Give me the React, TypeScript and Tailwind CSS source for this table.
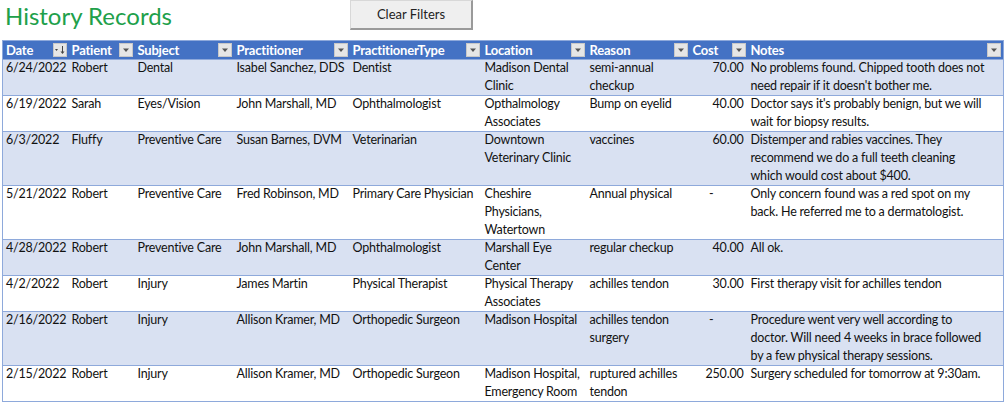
const cols = [
  { key: "date", label: "Date", w: 66 },
  { key: "patient", label: "Patient", w: 66 },
  { key: "subject", label: "Subject", w: 99 },
  { key: "practitioner", label: "Practitioner", w: 116 },
  { key: "ptype", label: "PractitionerType", w: 132 },
  { key: "location", label: "Location", w: 105 },
  { key: "reason", label: "Reason", w: 103 },
  { key: "cost", label: "Cost", w: 58 },
  { key: "notes", label: "Notes", w: 256 },
];

type Row = {
  date: string;
  patient: string;
  subject: string;
  practitioner: string;
  ptype: string;
  location: string;
  reason: string;
  cost: string;
  notes: string;
};

// line breaks follow the wrapping of the sheet
const rows: Row[] = [
  {
    date: "6/24/2022",
    patient: "Robert",
    subject: "Dental",
    practitioner: "Isabel Sanchez, DDS",
    ptype: "Dentist",
    location: "Madison Dental\nClinic",
    reason: "semi-annual\ncheckup",
    cost: "70.00",
    notes: "No problems found. Chipped tooth does not\nneed repair if it doesn't bother me.",
  },
  {
    date: "6/19/2022",
    patient: "Sarah",
    subject: "Eyes/Vision",
    practitioner: "John Marshall, MD",
    ptype: "Ophthalmologist",
    location: "Opthalmology\nAssociates",
    reason: "Bump on eyelid",
    cost: "40.00",
    notes: "Doctor says it's probably benign, but we will\nwait for biopsy results.",
  },
  {
    date: "6/3/2022",
    patient: "Fluffy",
    subject: "Preventive Care",
    practitioner: "Susan Barnes, DVM",
    ptype: "Veterinarian",
    location: "Downtown\nVeterinary Clinic",
    reason: "vaccines",
    cost: "60.00",
    notes: "Distemper and rabies vaccines. They\nrecommend we do a full teeth cleaning\nwhich would cost about $400.",
  },
  {
    date: "5/21/2022",
    patient: "Robert",
    subject: "Preventive Care",
    practitioner: "Fred Robinson, MD",
    ptype: "Primary Care Physician",
    location: "Cheshire\nPhysicians,\nWatertown",
    reason: "Annual physical",
    cost: "-",
    notes: "Only concern found was a red spot on my\nback. He referred me to a dermatologist.",
  },
  {
    date: "4/28/2022",
    patient: "Robert",
    subject: "Preventive Care",
    practitioner: "John Marshall, MD",
    ptype: "Ophthalmologist",
    location: "Marshall Eye\nCenter",
    reason: "regular checkup",
    cost: "40.00",
    notes: "All ok.",
  },
  {
    date: "4/2/2022",
    patient: "Robert",
    subject: "Injury",
    practitioner: "James Martin",
    ptype: "Physical Therapist",
    location: "Physical Therapy\nAssociates",
    reason: "achilles tendon",
    cost: "30.00",
    notes: "First therapy visit for achilles tendon",
  },
  {
    date: "2/16/2022",
    patient: "Robert",
    subject: "Injury",
    practitioner: "Allison Kramer, MD",
    ptype: "Orthopedic Surgeon",
    location: "Madison Hospital",
    reason: "achilles tendon\nsurgery",
    cost: "-",
    notes: "Procedure went very well according to\ndoctor. Will need 4 weeks in brace followed\nby a few physical therapy sessions.",
  },
  {
    date: "2/15/2022",
    patient: "Robert",
    subject: "Injury",
    practitioner: "Allison Kramer, MD",
    ptype: "Orthopedic Surgeon",
    location: "Madison Hospital,\nEmergency Room",
    reason: "ruptured achilles\ntendon",
    cost: "250.00",
    notes: "Surgery scheduled for tomorrow at 9:30am.",
  },
];

// little dropdown square on the header cells
function FilterButton({ sorted }: { sorted?: boolean }) {
  return (
    <span className="absolute right-[2px] top-[2px] w-[14px] h-[14px] bg-[#e6e6e6] border border-[#c8c8c8] flex items-center justify-center">
      {sorted ? (
        <svg width="12" height="10" viewBox="0 0 12 10">
          <path d="M1 4 L4 4 L2.5 6 Z" fill="#444" />
          <path d="M8.5 1 V8" stroke="#444" strokeWidth="1" />
          <path d="M6.5 6.5 L8.5 9 L10.5 6.5 Z" fill="#444" />
        </svg>
      ) : (
        <svg width="8" height="6" viewBox="0 0 8 6">
          <path d="M1 1.5 L7 1.5 L4 5 Z" fill="#555" />
        </svg>
      )}
    </span>
  );
}

export default function App() {
  return (
    <div
      className="w-[1005px] h-[410px] bg-white overflow-hidden text-[#111]"
      style={{ fontFamily: "Lato, 'Open Sans', sans-serif" }}
    >
      <div className="flex h-[40px]">
        <h1 className="w-[350px] pl-[5px] pt-[1px] text-[24px] leading-[30px] text-[#20a04a]">
          History Records
        </h1>
        <button className="w-[123px] h-[30px] bg-[#efefef] border border-[#d8d8d8] border-r-[#9a9a9a] border-b-[#9a9a9a] border-r-2 border-b-2 text-[13px] text-[#222]">
          Clear Filters
        </button>
      </div>

      <table className="ml-[2px] table-fixed border-collapse border border-[#8ea9db] text-[12.5px] tracking-[-0.2px] leading-[18px] w-[1001px]">
        <colgroup>
          {cols.map((c) => (
            <col key={c.key} style={{ width: c.w }} />
          ))}
        </colgroup>
        <thead>
          <tr className="bg-[#4472c4] text-white">
            {cols.map((c, i) => (
              <th
                key={c.key}
                className="relative h-[18px] p-0 pl-[3px] text-left text-[13px] tracking-[-0.2px] font-bold whitespace-nowrap"
              >
                {c.label}
                <FilterButton sorted={i === 0} />
              </th>
            ))}
          </tr>
        </thead>
        <tbody>
          {rows.map((r, i) => (
            <tr
              key={i}
              className={`align-top ${i % 2 === 0 ? "bg-[#d9e1f2]" : "bg-white"}`}
            >
              {cols.map((c) =>
                c.key === "cost" ? (
                  <td
                    key={c.key}
                    className="p-0 pr-[4px] text-right shadow-[inset_0_1px_0_#8ea9db]"
                  >
                    {r.cost === "-" ? (
                      <span className="mr-[30px]">-</span>
                    ) : (
                      r.cost
                    )}
                  </td>
                ) : (
                  <td
                    key={c.key}
                    className="p-0 pl-[3px] whitespace-pre-line shadow-[inset_0_1px_0_#8ea9db]"
                  >
                    {r[c.key as keyof Row]}
                  </td>
                )
              )}
            </tr>
          ))}
        </tbody>
      </table>
    </div>
  );
}
